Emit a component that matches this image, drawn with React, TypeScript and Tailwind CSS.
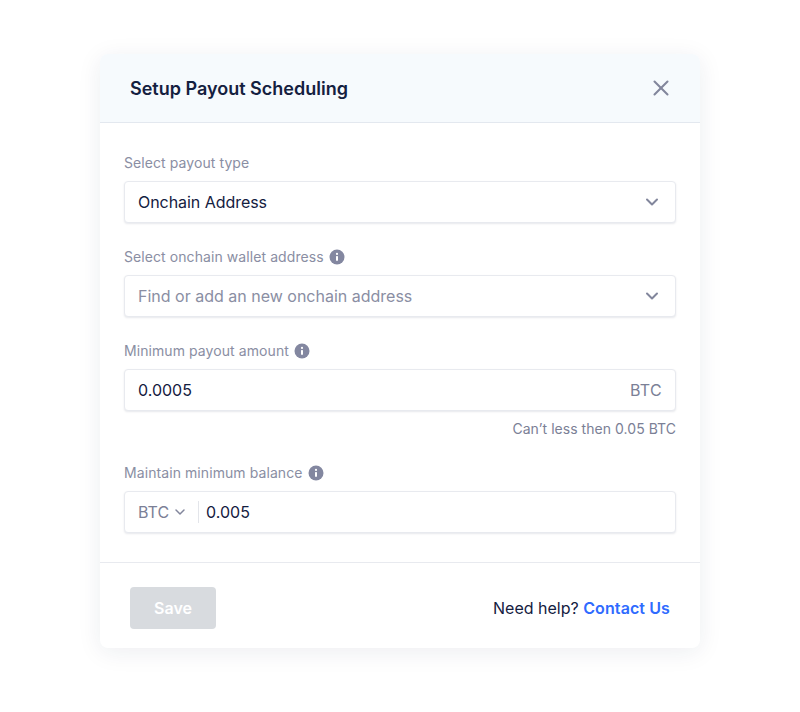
import { ChevronDown, X } from "lucide-react";

const InfoIcon = () => (
	<svg width="16" height="16" viewBox="0 0 16 16" className="shrink-0">
		<circle cx="8" cy="8" r="7.5" fill="#8387a0" />
		<circle cx="8" cy="4.9" r="1.1" fill="#fff" />
		<rect x="7" y="7" width="2" height="4.8" rx="0.6" fill="#fff" />
	</svg>
);

const Label = ({ text, info }: { text: string; info?: boolean }) => (
	<div className="mb-2 flex h-5 items-center gap-[5px] text-sm leading-5 tracking-[0.08px] text-[#8a8ea3]">
		<span>{text}</span>
		{info && <InfoIcon />}
	</div>
);

const Field = ({ children }: { children: React.ReactNode }) => (
	<div className="flex h-[42px] items-center rounded border border-[#e8eaef] bg-white px-[13px] text-base shadow-[0_1px_2px_rgba(20,30,70,0.1)]">
		{children}
	</div>
);

const App = () => {
	return (
		<div className="flex min-h-[712px] w-full justify-center bg-white pt-[54px] font-['Inter',sans-serif] text-[#14203f]">
			<div className="h-[594px] w-[600px] overflow-hidden rounded-lg bg-white shadow-[0_4px_24px_rgba(30,40,80,0.08)]">
				<div className="flex h-[69px] items-center justify-between border-b border-[#e3e8ef] bg-[#f6fafd] pr-[26px] pl-[30px]">
					<h2 className="mt-[2px] text-lg font-semibold">Setup Payout Scheduling</h2>
					<X size={26} strokeWidth={1.9} className="text-[#82869c]" />
				</div>

				<div className="px-6 pt-[30px] pb-[29px]">
					<Label text="Select payout type" />
					<Field>
						<span className="flex-1 tracking-[-0.05px]">Onchain Address</span>
						<ChevronDown size={20} strokeWidth={2.4} className="text-[#82869c]" />
					</Field>

					<div className="mt-6">
						<Label text="Select onchain wallet address" info />
						<Field>
							<span className="flex-1 text-[#8a8ea3]">
								Find or add an new onchain address
							</span>
							<ChevronDown size={20} strokeWidth={2.4} className="text-[#82869c]" />
						</Field>
					</div>

					<div className="mt-6">
						<Label text="Minimum payout amount" info />
						<Field>
							<span className="flex-1">0.0005</span>
							<span className="tracking-[0.3px] text-[#7b8096]">BTC</span>
						</Field>
						<p className="mt-2 text-right text-sm leading-5 tracking-[0.04px] text-[#7b8096]">
							Can’t less then 0.05 BTC
						</p>
					</div>

					<div className="mt-6">
						<Label text="Maintain minimum balance" info />
						<Field>
							<span className="text-[#7b8096]">BTC</span>
							<ChevronDown size={16} strokeWidth={2.25} className="ml-[3px] text-[#82869c]" />
							<span className="mr-[7px] ml-[10px] h-[22px] w-px bg-[#e3e5ea]" />
							<span>0.005</span>
						</Field>
					</div>
				</div>

				<div className="flex items-start justify-between border-t border-[#e8eaef] px-[30px] pt-6">
					<button className="h-[42px] w-[86px] rounded bg-[#d8dbdf] text-base font-semibold text-white">
						Save
					</button>
					<p className="mt-[11px] text-base leading-5">
						Need help? <span className="font-semibold tracking-[0.1px] text-[#2f6bff]">Contact Us</span>
					</p>
				</div>
			</div>
		</div>
	);
};

export default App;
